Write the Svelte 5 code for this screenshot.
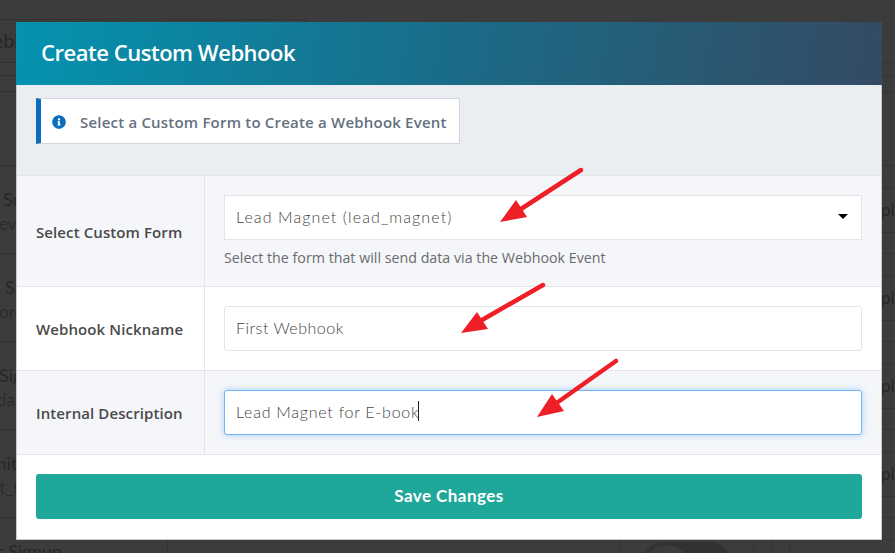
<script>
  const rows = [
    { name: "Subscribe", sub: "event_sub", nameX: 3, subX: -1 },
    { name: "Sales", sub: "order_form", nameX: 5, subX: -1 },
    { name: "Signup", sub: "dalton", nameX: -1, subX: -3 },
    { name: "Submit", sub: "st_form", nameX: -38, subX: -8 },
    { name: "News Signup", sub: "", nameX: -41, subX: 0 },
  ];

  const arrows = [
    { tail: "581,170", neck: "521,209", head: "500,222 516,200 527,217" },
    { tail: "543,285", neck: "482,320", head: "461,333 477,312 488,329" },
    { tail: "616,361", neck: "558,402", head: "537,417 552,394 564,411" },
  ];
</script>

<div class="page">
  <div class="backdrop">
    <div class="page-title">Webhooks</div>
    <div class="table-gap"></div>
    <div class="table-head"></div>
    <div class="table-first"></div>
    {#each rows as row}
      <div class="row">
        <div class="cell-name">
          <div class="name" style="margin-left: {row.nameX}px">{row.name}</div>
          <div class="sub" style="margin-left: {row.subX}px">{row.sub}</div>
        </div>
        <div class="cell-url"></div>
        <div class="cell-toggle"><span class="pill"><span class="knob"></span></span></div>
        <div class="cell-gap"></div>
        <div class="cell-action"><span class="ghost-btn">Template</span></div>
      </div>
    {/each}
  </div>

  <div class="modal">
    <h2 class="modal-head">Create Custom Webhook</h2>

    <div class="intro">
      <div class="notice">
        <svg class="info" viewBox="0 0 512 512" width="14" height="14" aria-hidden="true">
          <path
            d="M256 8C119 8 8 119 8 256s111 248 248 248 248-111 248-248S393 8 256 8zm0 110c23 0 42 19 42 42s-19 42-42 42-42-19-42-42 19-42 42-42zm56 254c0 7-5 12-12 12h-88c-7 0-12-5-12-12v-24c0-7 5-12 12-12h12v-64h-12c-7 0-12-5-12-12v-24c0-7 5-12 12-12h64c7 0 12 5 12 12v100h12c7 0 12 5 12 12v24z"
          />
        </svg>
        <span>Select a Custom Form to Create a Webhook Event</span>
      </div>
    </div>

    <div class="form-row tinted first">
      <div class="label">Select Custom Form</div>
      <div class="control">
        <div class="select-wrap">
          <select>
            <option>Lead Magnet (lead_magnet)</option>
          </select>
          <span class="caret-down"></span>
        </div>
        <p class="help">Select the form that will send data via the Webhook Event</p>
      </div>
    </div>

    <div class="form-row">
      <div class="label">Webhook Nickname</div>
      <div class="control">
        <input type="text" value="First Webhook" />
      </div>
    </div>

    <div class="form-row tinted">
      <div class="label">Internal Description</div>
      <div class="control">
        <div class="input-wrap">
          <input class="focused" type="text" value="Lead Magnet for E-book" />
          <span class="text-caret"></span>
        </div>
      </div>
    </div>

    <div class="modal-foot">
      <button type="button">Save Changes</button>
    </div>
  </div>

  <svg class="arrows" viewBox="0 0 895 553" width="895" height="553" aria-hidden="true">
    {#each arrows as arrow}
      <polyline points="{arrow.tail} {arrow.neck}" />
      <polygon points={arrow.head} />
    {/each}
  </svg>
</div>

<style>
  :global(body) {
    overflow: hidden;
    background: #3b3c3b;
  }

  .page {
    position: relative;
    width: 895px;
    height: 553px;
    overflow: hidden;
    background: #3b3c3b;
    font-family: "Open Sans", "Liberation Sans", sans-serif;
  }

  /* dimmed page behind the modal */
  .backdrop {
    padding-top: 19px;
    color: #272727;
    font-family: Lato, "Liberation Sans", sans-serif;
  }

  .page-title {
    box-sizing: border-box;
    width: 366px;
    height: 43px;
    margin-left: -60px;
    padding-left: 33px;
    border-top: 1px solid #323332;
    border-right: 1px solid #323332;
    font-size: 20px;
    line-height: 40px;
    white-space: nowrap;
  }

  .table-gap {
    height: 12px;
    border-top: 1px solid #323332;
  }

  .table-head {
    height: 15px;
    border-top: 1px solid #323332;
  }

  .table-first {
    height: 73px;
    border-top: 1px solid #323332;
    border-bottom: 1px solid #323332;
  }

  .row {
    display: grid;
    grid-template-columns: 167px 453px 133px 19px 1fr;
    height: 87px;
    border-bottom: 1px solid #323332;
    white-space: nowrap;
  }

  .cell-name {
    padding-top: 22px;
    overflow: hidden;
  }

  .name {
    font-size: 18px;
    line-height: 22px;
  }

  .sub {
    margin-top: 4px;
    font-size: 17px;
    line-height: 20px;
    color: #2c2c2c;
  }

  .cell-url,
  .cell-gap,
  .cell-toggle {
    border-left: 1px solid #323332;
  }

  .cell-toggle {
    padding: 24px 0 0 22px;
  }

  .pill {
    display: block;
    box-sizing: border-box;
    width: 87px;
    height: 40px;
    padding: 4px;
    border-radius: 20px;
    background: #323232;
  }

  .knob {
    display: block;
    width: 40px;
    height: 32px;
    border-radius: 16px;
    background: #3c3c3c;
  }

  .cell-action {
    padding-top: 21px;
    border-left: 1px solid #323332;
    font-size: 17px;
  }

  .ghost-btn {
    display: block;
    box-sizing: border-box;
    width: 160px;
    height: 46px;
    margin-left: 16px;
    padding-left: 60px;
    border: 1px solid #323332;
    line-height: 44px;
  }

  .modal {
    position: absolute;
    top: 22px;
    left: 16px;
    box-sizing: border-box;
    width: 866px;
    height: 518px;
    background: #fff;
    border: 1px solid #c8c9cb;
    border-top: 0;
  }

  .modal-head {
    margin: 0 -1px;
    height: 63px;
    padding-left: 25px;
    background: linear-gradient(100deg, #0493b0 0%, #1a6c88 50%, #344a63 100%);
    color: #fff;
    font-size: 22px;
    font-weight: 600;
    letter-spacing: -0.47px;
    line-height: 61px;
  }

  .intro {
    height: 90px;
    padding: 13px 0 0 19px;
    box-sizing: border-box;
    background: #eaedf2;
  }

  .notice {
    display: inline-flex;
    align-items: center;
    box-sizing: border-box;
    width: 424px;
    height: 46px;
    padding: 1px 0 0 11px;
    background: #fff;
    border: 1px solid #d3d6db;
    border-left: 5px solid #0a6cbc;
    color: #657080;
    font-size: 15px;
    font-weight: 600;
    letter-spacing: 0.2px;
    white-space: nowrap;
  }

  .info {
    flex: none;
    margin-right: 14px;
    fill: #0a6cbc;
  }

  .form-row {
    display: grid;
    grid-template-columns: 188px 1fr;
    box-sizing: border-box;
    height: 84px;
    border-bottom: 1px solid #e3e5ea;
  }

  .form-row.first {
    height: 112px;
    border-top: 1px solid #e3e5ea;
  }

  .tinted {
    background: #f4f6fa;
  }

  .label {
    display: flex;
    align-items: center;
    padding: 1px 0 0 19px;
    border-right: 1px solid #e3e5ea;
    color: #4a4a4a;
    font-size: 15px;
    font-weight: 600;
    letter-spacing: 0.1px;
    white-space: nowrap;
  }

  .control {
    padding: 19px 19px 0;
  }

  .select-wrap,
  .input-wrap {
    position: relative;
  }

  select,
  input {
    display: block;
    box-sizing: border-box;
    width: 100%;
    height: 45px;
    margin: 0;
    padding: 0 11px 2px;
    background: #fff;
    border: 1px solid #e4e5e8;
    border-radius: 3px;
    outline: 0;
    appearance: none;
    color: #444;
    font-family: Lato, "Liberation Sans", sans-serif;
    font-size: 16px;
    font-weight: 300;
    letter-spacing: 0.5px;
  }

  select {
    border-radius: 0;
    letter-spacing: 1.1px;
  }

  input.focused {
    border-color: #70b6f5;
    box-shadow: 0 0 6px rgba(112, 182, 245, 0.6);
    letter-spacing: 0.75px;
  }

  .caret-down {
    position: absolute;
    top: 19px;
    right: 14px;
    border-top: 5px solid #000;
    border-left: 5px solid transparent;
    border-right: 5px solid transparent;
  }

  .text-caret {
    position: absolute;
    top: 11px;
    left: 194px;
    width: 1px;
    height: 20px;
    background: #222;
  }

  .help {
    margin: 9px 0 0;
    color: #6b6b6b;
    font-size: 14.25px;
    line-height: 18px;
    white-space: nowrap;
  }

  .modal-foot {
    padding: 19px 19px 0;
  }

  button {
    display: block;
    width: 100%;
    height: 45px;
    padding: 0 0 2px;
    border: 0;
    border-radius: 3px;
    background: #1fa799;
    color: #fff;
    font-family: Lato, "Liberation Sans", sans-serif;
    font-size: 17px;
    font-weight: 700;
    letter-spacing: 0.45px;
  }

  .arrows {
    position: absolute;
    top: 0;
    left: 0;
    pointer-events: none;
  }

  .arrows polyline {
    fill: none;
    stroke: #ee1f26;
    stroke-width: 4.5;
    stroke-linecap: round;
  }

  .arrows polygon {
    fill: #ee1f26;
  }
</style>
